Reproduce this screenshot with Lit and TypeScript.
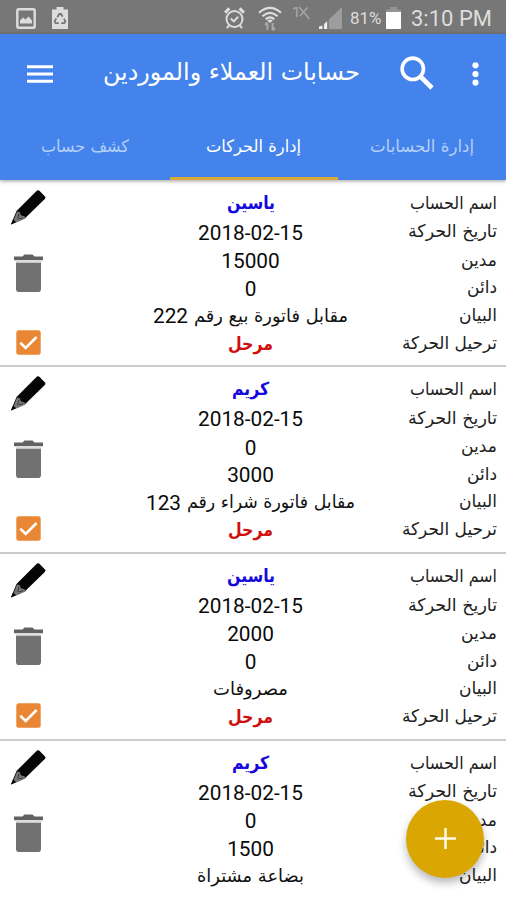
import { LitElement, html, css, nothing } from "lit";
import { customElement, property } from "lit/decorators.js";

/** A single run of Arabic text set to a given advance width. */
@customElement("fit-text")
export class FitText extends LitElement {
  @property() text = "";
  @property({ type: Number }) w = 80;
  @property({ type: Number }) size = 18;
  @property({ type: Number }) base = 20;
  @property({ type: Boolean }) bold = false;

  static styles = css`
    :host { display: block; flex: none; height: 28px; }
    svg { display: block; overflow: visible; }
    text { font-family: "DejaVu Sans", sans-serif; fill: currentColor; text-anchor: middle; direction: rtl; }
    .bold { font-weight: 700; }
  `;

  render() {
    return html`<svg width=${this.w} height="28">
      <text class=${this.bold ? "bold" : ""} x=${this.w / 2} y=${this.base} font-size=${this.size}
        textLength=${this.w} lengthAdjust="spacingAndGlyphs">${this.text}</text>
    </svg>`;
  }
}

interface Rec {
  name: string; nameW: number;
  debit: string; credit: string;
  note: string; noteW: number; num?: string;
  /** The posting row is not on screen yet. */
  clipped?: boolean;
}

const records: Rec[] = [
  { name: "ياسين", nameW: 48, debit: "15000", credit: "0", note: "مقابل فاتورة بيع رقم", noteW: 154, num: "222" },
  { name: "كريم", nameW: 37, debit: "0", credit: "3000", note: "مقابل فاتورة شراء رقم", noteW: 168, num: "123" },
  { name: "ياسين", nameW: 48, debit: "2000", credit: "0", note: "مصروفات", noteW: 75 },
  { name: "كريم", nameW: 37, debit: "0", credit: "1500", note: "بضاعة مشتراة", noteW: 107, clipped: true },
];

const labels: [string, number][] = [
  ["اسم الحساب", 87], ["تاريخ الحركة", 89], ["مدين", 36], ["دائن", 30], ["البيان", 38], ["ترحيل الحركة", 95],
];

@customElement("record-card")
export class RecordCard extends LitElement {
  @property({ attribute: false }) rec!: Rec;

  static styles = css`
    :host { display: block; flex: none; }
    .card {
      height: 186.6px; box-sizing: border-box; border-bottom: 2px solid #cbcbcb;
      display: grid; grid-template-columns: 105px 1fr 105px; padding: 7px 9px 0 4px;
      background: #fff;
    }
    .lines { display: grid; grid-template-rows: 28.5px 28.5px 27.5px 27.5px 28px 28px; direction: rtl; }
    .line { display: flex; height: 28px; }
    .labels { color: #222; }
    .values { color: #111; }
    .values .line { justify-content: center; gap: 6px; }
    .num { font: 20.8px/28px Roboto, sans-serif; direction: ltr; color: #0a0a0a; white-space: nowrap; padding-top: 2.4px; }
    .note { padding-top: 1px; }
    .name { color: #1508dc; }
    .posted { color: #d0100f; }
    .icons { display: flex; flex-direction: column; }
    .icons svg { display: block; }
    .pencil { margin: 1px 0 0 6px; }
    .trash { margin: 29px 0 0 10px; }
    .check { margin: 38px 0 0 12px; }
  `;

  render() {
    const r = this.rec;
    const shown = r.clipped ? labels.slice(0, 5) : labels;
    return html`<div class="card">
      <div class="icons">
        <svg class="pencil" width="37" height="36" viewBox="0 0 37 36">
          <path d="M1 35.5 6.5 22 27 1.6Q28.2.6 29.4 1.8L35 7.6Q36 8.8 34.8 10L15 29.3Z" fill="#050505"/>
          <path d="M3.6 31.5 7 22.5l3 .8.8 3 3.6 1 1.4 1.9-9.3 4.2Z" fill="#777"/>
          <path d="M1 35.5 3 30.6 6 33.3Z" fill="#050505"/>
          <path d="M7.6 30 9 24.5M8.6 30l4.6-1.4" stroke="#333" stroke-width=".9"/>
        </svg>
        <svg class="trash" width="29" height="38" viewBox="0 0 29 37" preserveAspectRatio="none">
          <path d="M0 2.5h8.5L10.5.5h8l2 2H29V6H0Z" fill="#626262"/>
          <path d="M2 6h25v2.6H2Z" fill="#ddd"/>
          <path d="M2 8.6h25V34Q27 37 24 37H5Q2 37 2 34Z" fill="#717171"/>
        </svg>
        ${r.clipped ? nothing : html`<svg class="check" width="25" height="25" viewBox="0 0 25 25">
          <rect x=".3" y=".3" width="24.4" height="24.4" rx="2.5" fill="#e98734"/>
          <path d="M4.3 12.8 9.7 18 20.6 7" fill="none" stroke="#fff" stroke-width="2.6"/>
        </svg>`}
      </div>
      <div class="lines values">
        <div class="line name"><fit-text bold .text=${r.name} .w=${r.nameW} .size=${18} .base=${21}></fit-text></div>
        <div class="line"><span class="num">2018-02-15</span></div>
        <div class="line"><span class="num">${r.debit}</span></div>
        <div class="line"><span class="num">${r.credit}</span></div>
        <div class="line">
          <fit-text class="note" .text=${r.note} .w=${r.noteW} .size=${18} .base=${21}></fit-text>
          ${r.num ? html`<span class="num">${r.num}</span>` : nothing}
        </div>
        ${r.clipped ? nothing : html`<div class="line posted"><fit-text bold .text=${"مرحل"} .w=${45} .size=${18} .base=${22}></fit-text></div>`}
      </div>
      <div class="lines labels">
        ${shown.map(([t, w]) => html`<div class="line"><fit-text .text=${t} .w=${w} .size=${17.5} .base=${21.3}></fit-text></div>`)}
      </div>
    </div>`;
  }
}

@customElement("app-root")
export class AppRoot extends LitElement {
  static styles = css`
    :host {
      display: flex; flex-direction: column; position: relative; width: 506px; height: 900px;
      overflow: hidden; background: #fff; font-family: Roboto, sans-serif;
    }
    svg { display: block; flex: none; }
    .status { height: 34px; flex: none; background: #777; display: flex; align-items: center; color: #ddd; box-sizing: border-box; padding: 2px 14px 0 16px; }
    .recycle { margin-left: 16px; }
    .grow { flex: 1; }
    .alarm { margin-right: 1px; }
    .wifi { margin-left: 12px; }
    .mute { margin: -10px 0 0 11px; }
    .signal { margin-left: 9px; }
    .pct { font-size: 17px; width: 32px; margin-left: 8px; white-space: nowrap; }
    .batt { margin-left: 4px; }
    .time { font-size: 22px; margin-left: 10px; white-space: nowrap; width: 81px; }
    .header { height: 146px; flex: none; background: #4383eb; box-shadow: 0 1px 4px rgba(0,0,0,.4); z-index: 1; display: flex; flex-direction: column; }
    .bar { height: 80px; display: flex; align-items: center; color: #fff; }
    .menu { margin-left: 27px; }
    .title { margin-left: 50px; }
    .search { margin-left: 40px; margin-top: -2px; }
    .dots { margin-left: 38px; margin-top: -1px; }
    .tabs { flex: 1; display: grid; grid-template-columns: 169.5px 168.5px 168px; color: #b5cff8; }
    .tab { display: flex; justify-content: center; align-items: center; border-bottom: 3px solid transparent; box-sizing: border-box; }
    .tab.on { color: #fff; border-bottom-color: #d9a93a; }
    .list { flex: 1; display: flex; flex-direction: column; padding-top: .9px; overflow: hidden; }
    .fab {
      position: absolute; left: 406px; top: 799.5px; width: 78px; height: 78px; border-radius: 50%;
      background: #daa602; box-shadow: 0 5px 9px rgba(0,0,0,.28); display: flex; align-items: center; justify-content: center; z-index: 2;
    }
  `;

  render() {
    return html`
      <div class="status">
        <svg width="20" height="21" viewBox="0 0 20 21">
          <rect x="1.3" y="1.3" width="17.4" height="18.4" rx="1.5" fill="none" stroke="#ddd" stroke-width="2.4"/>
          <path d="M4 15.5v-3l3-3 2.5 2 3-3 3.5 4v3Z" fill="#ddd"/>
        </svg>
        <svg class="recycle" width="16" height="22" viewBox="0 0 16 22">
          <path d="M0 2.5h4.5V0h7v2.5H16V22H0Z" fill="#ddd"/>
          <g fill="none" stroke="#777" stroke-width="1.8">
            <path d="M5.3 10.2 7.3 7h1.8l1.6 2.8"/><path d="M12 11.6l1.3 2.8-1 1.8H9.2"/><path d="M6.8 16.2H3.5L2.7 14.4l1.6-3"/>
          </g>
        </svg>
        <div class="grow"></div>
        <svg class="alarm" width="21" height="22" viewBox="0 0 21 22">
          <g fill="none" stroke="#ddd" stroke-width="2">
            <circle cx="10.5" cy="12" r="8"/><path d="M1 5.6 5.4 1.4M20 5.6 15.6 1.4" stroke-width="3"/>
            <path d="M6.8 11.6l3 2.8 4.4-4.6M5 18.4l-2 2.8M16 18.4l2 2.8"/>
          </g>
        </svg>
        <svg class="wifi" width="24" height="25" viewBox="0 0 24 25">
          <g fill="none" stroke="#ddd" stroke-width="2.1">
            <path d="M1 6.8Q12-3 23 6.8"/><path d="M4.4 10.2Q12 3.4 19.6 10.2"/><path d="M7.7 13.3Q12 9.6 16.3 13.3"/>
          </g>
          <path d="M9.2 14.6Q12 12.6 14.8 14.6L12 17Z" fill="#ddd"/>
          <path d="M9.4 24v-7M7.2 19l2.2-2.5M14.6 17v7M16.8 22l-2.2 2.5" stroke="#aaa" stroke-width="2" fill="none"/>
        </svg>
        <svg class="mute" width="17" height="14" viewBox="0 0 17 14">
          <path d="M0 3 3.5 1.5M3.8 1v10M6 1l10.5 12M14.5 1.5 7 10" stroke="#a2a2a2" stroke-width="1.8" fill="none"/>
        </svg>
        <svg class="signal" width="23" height="22" viewBox="0 0 23 22">
          <path d="M0 22 23 0V22Z" fill="#9d9d9d"/>
          <path d="M0 22V19.5L3.5 18.5V22ZM5 22V17l3-2.5V22Z" fill="#eee"/><path d="M4.3 17v5M9.2 13v9" stroke="#777" stroke-width="1.2"/>
        </svg>
        <span class="pct">81%</span>
        <svg class="batt" width="15" height="22" viewBox="0 0 15 22">
          <path d="M0 2.5h4V0h7v2.5h4V6H0Z" fill="#949494"/><path d="M0 5h15v17H0Z" fill="#fff"/>
        </svg>
        <span class="time">3:10 PM</span>
      </div>
      <div class="header">
        <div class="bar">
          <svg class="menu" width="26" height="18" viewBox="0 0 26 18"><path d="M0 1.7h26M0 9h26M0 16.3h26" stroke="#fff" stroke-width="3"/></svg>
          <fit-text class="title" .text=${"حسابات العملاء والموردين"} .w=${257} .size=${24} .base=${20}></fit-text>
          <svg class="search" width="34" height="34" viewBox="0 0 34 34">
            <circle cx="12.8" cy="12.8" r="10.7" fill="none" stroke="#fff" stroke-width="3.6"/>
            <path d="M20.5 20.5 32 32" stroke="#fff" stroke-width="4.6"/>
          </svg>
          <svg class="dots" width="7" height="24" viewBox="0 0 7 24"><g fill="#fff"><circle cx="3.5" cy="3.3" r="3.1"/><circle cx="3.5" cy="12" r="3.1"/><circle cx="3.5" cy="20.6" r="3.1"/></g></svg>
        </div>
        <div class="tabs">
          <div class="tab"><fit-text .text=${"كشف حساب"} .w=${88} .size=${17} .base=${20}></fit-text></div>
          <div class="tab on"><fit-text .text=${"إدارة الحركات"} .w=${95} .size=${17} .base=${20}></fit-text></div>
          <div class="tab"><fit-text .text=${"إدارة الحسابات"} .w=${104} .size=${17} .base=${20}></fit-text></div>
        </div>
      </div>
      <div class="list">${records.map((r) => html`<record-card .rec=${r}></record-card>`)}</div>
      <div class="fab"><svg width="21" height="21" viewBox="0 0 21 21"><path d="M0 10.5h21M10.5 0v21" stroke="#fffbe8" stroke-width="2.5"/></svg></div>
    `;
  }
}
